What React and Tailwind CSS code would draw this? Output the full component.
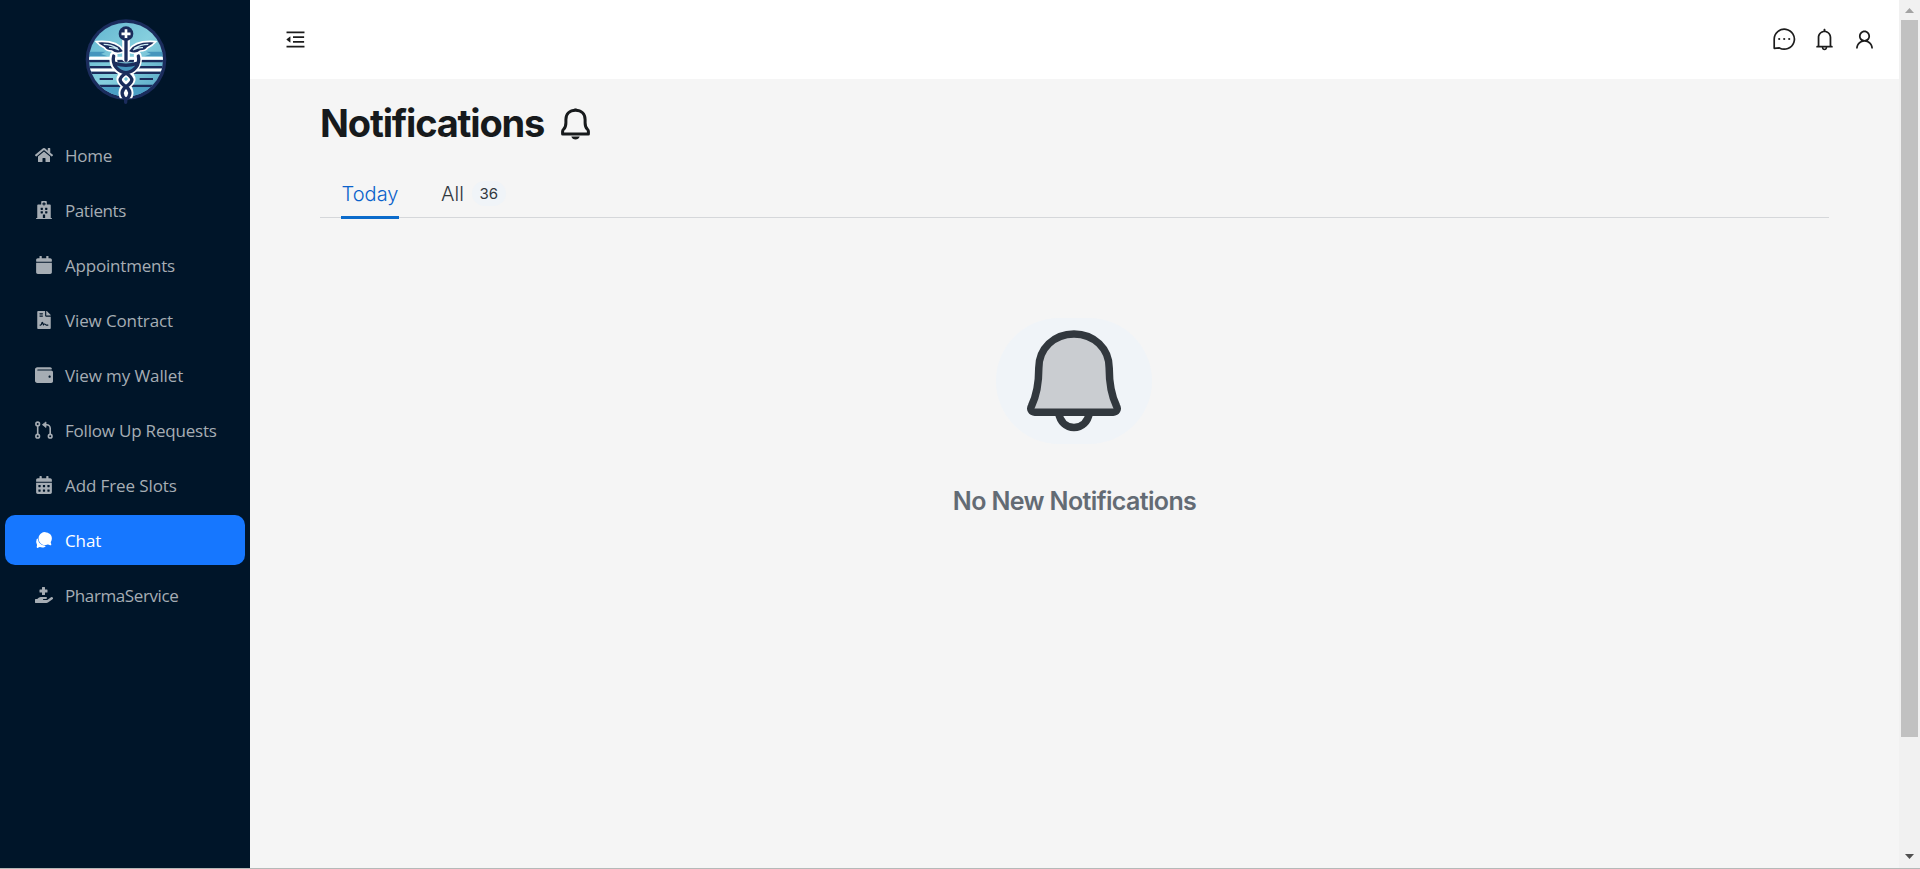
import {
  FaHome,
  FaHospital,
  FaCalendar,
  FaFileContract,
  FaWallet,
  FaCalendarAlt,
  FaHandHoldingMedical,
} from "react-icons/fa";
import { IoChatbubbles } from "react-icons/io5";
import { AiOutlineMenuFold, AiOutlineBell, AiOutlineUser } from "react-icons/ai";

function PullRequest({ className }) {
  return (
    <svg className={className} viewBox="0 0 18 18" fill="none" stroke="currentColor" strokeWidth="1.600">
      <circle cx="2.700" cy="2.900" r="1.800" />
      <circle cx="2.700" cy="15.200" r="1.800" />
      <circle cx="15.200" cy="15.200" r="1.800" />
      <path d="M2.700 4.700v8.700M15.200 13.400V7.200a3.500 3.500 0 0 0-3.500-3.500H10" />
      <path d="M11 .900v5.600L7.400 3.700Z" fill="currentColor" strokeWidth=".8" strokeLinejoin="round" />
    </svg>
  );
}

const items = [
  { label: "Home", Icon: FaHome, tracking: "tracking-[-0.25px]" },
  { label: "Patients", Icon: FaHospital, tracking: "tracking-[-0.4px]" },
  { label: "Appointments", Icon: FaCalendar, tracking: "tracking-[-0.2px]" },
  { label: "View Contract", Icon: FaFileContract, tracking: "tracking-[-0.13px]" },
  { label: "View my Wallet", Icon: FaWallet, tracking: "tracking-[-0.1px]" },
  { label: "Follow Up Requests", Icon: PullRequest, tracking: "tracking-[-0.2px]" },
  { label: "Add Free Slots", Icon: FaCalendarAlt, tracking: "tracking-[-0.1px]" },
  { label: "Chat", Icon: IoChatbubbles, tracking: "tracking-[-0.1px]", active: true },
  { label: "PharmaService", Icon: FaHandHoldingMedical, tracking: "tracking-[-0.4px]" },
];

function Logo() {
  return (
    <svg className="h-[86px] w-[82px]" viewBox="0 0 246 258" fill="none">
      <defs>
        <clipPath id="disc">
          <circle cx="123" cy="122" r="111" />
        </clipPath>
        <clipPath id="body">
          <path d="M0 0h246v238H0z" />
        </clipPath>
        <linearGradient id="sky" x1="0" y1="0" x2="1" y2="1">
          <stop offset="0" stopColor="#5cb2ce" />
          <stop offset="0.5" stopColor="#86cfde" />
          <stop offset="1" stopColor="#4d9fc0" />
        </linearGradient>
      </defs>
      <circle cx="123" cy="122" r="121" fill="#1b2c5c" />
      <g clipPath="url(#disc)">
        <rect width="246" height="246" fill="url(#sky)" />
        <path d="M0 98h62l-14 7 20 7H0zM246 98h-62l14 7-20 7h68z" fill="#4596bd" />
        <path d="M0 126h246M0 145h246M0 161h246M0 201h246" stroke="#1b2c5c" strokeWidth="8" />
        <path d="M0 118h246M0 153h246" stroke="#fff" strokeWidth="9" />
        <path d="M44 180h40M164 180h40" stroke="#1b2c5c" strokeWidth="6" />
        <path d="M0 205h246v50H0z" fill="#4b9fc5" />
      </g>
      <path
        clipPath="url(#body)"
        d="M123 52v66M86 110c-6 26 12 48 36 51 24-3 42-25 36-51M122 160c-26 18-17 28 2 42 14 12 12 28 2 38M124 160c26 18 17 28-2 42-14 12-12 28-2 38"
        stroke="#fff"
        strokeWidth="23"
        strokeLinecap="round"
      />
      <path
        d="M115 94C104 76 82 64 34 68c8 10 16 14 24 18 4 7 12 10 22 10 8 8 22 8 35 3zM131 94c11-18 33-30 81-26-8 10-16 14-24 18-4 7-12 10-22 10-8 8-22 8-35 3z"
        fill="#1b2c5c"
        stroke="#fff"
        strokeWidth="5"
      />
      <path
        d="M56 76c16 0 29 4 43 13M72 86c10-1 18 1 30 7M190 76c-16 0-29 4-43 13M174 86c-10-1-18 1-30 7"
        stroke="#cbeaf2"
        strokeWidth="4"
      />
      <circle cx="123" cy="44" r="22" fill="#1b2c5c" />
      <path d="M123 31v27M109.500 44.500h27" stroke="#fff" strokeWidth="8" />
      <path d="M90 134c4 16 18 27 33 28 15-1 29-12 33-28z" fill="#4596bd" />
      <path
        d="M123 62v62M86 111c-6 26 12 47 37 50 25-3 43-24 37-50M90 133c20 7 46 7 66 0"
        stroke="#1b2c5c"
        strokeWidth="10"
        strokeLinecap="round"
      />
      <path
        d="M122 163c-26 16-18 27 1 40 16 12 15 26 1 38M124 163c26 16 18 27-1 40-16 12-15 26-1 38v9"
        stroke="#1b2c5c"
        strokeWidth="10"
        strokeLinecap="round"
      />
    </svg>
  );
}

function ChatDots() {
  return (
    <svg className="size-6" viewBox="0 0 24 24" fill="none">
      <path
        d="M2.200 21.300V12.200A10.100 10 0 1 1 7.400 20.900Z"
        stroke="#1c1c1c"
        strokeWidth="1.700"
        strokeLinejoin="round"
      />
      <circle cx="7.200" cy="12" r="1.100" fill="#1c1c1c" />
      <circle cx="12.200" cy="12" r="1.100" fill="#1c1c1c" />
      <circle cx="17.200" cy="12" r="1.100" fill="#1c1c1c" />
    </svg>
  );
}

function TitleBell() {
  return (
    <svg className="h-8 w-[29px]" viewBox="0 0 29 32" fill="none">
      <path
        d="M14.500 2.300C8.600 2.300 4.900 6 4.900 11.500v3.200c0 3.400-.8 5.100-2.300 6.600-.8.800-1 1.300-1 2.300v2.300h25.800v-2.300c0-1-.2-1.500-1-2.300-1.500-1.500-2.300-3.200-2.300-6.600v-3.200c0-5.500-3.700-9.200-9.600-9.200Z"
        stroke="#171a1c"
        strokeWidth="3"
        strokeLinejoin="round"
      />
      <path d="M12.300 1.500a2.300 1.500 0 0 1 4.400 0zM10.300 28.500h8.400c-.6 1.900-2.200 3-4.200 3s-3.600-1.100-4.200-3Z" fill="#171a1c" />
    </svg>
  );
}

function EmptyBell() {
  return (
    <svg className="mr-px h-[102px] w-[94px]" viewBox="0 0 94 102" fill="none">
      <path
        d="M47 3.900C27 3.900 11.800 18.500 11.800 38c0 18-2.700 28.500-7.300 38-1.800 3.200.1 6.200 3.200 6.200h78.600c3.100 0 5-3 3.200-6.200-4.600-9.500-7.300-20-7.300-38C82.200 18.500 67 3.900 47 3.900Z"
        fill="#cacdd1"
        stroke="#32383e"
        strokeWidth="7.500"
        strokeLinejoin="round"
      />
      <path d="M31.600 83c1.600 8.800 7.500 14.500 15.400 14.500S60.800 91.800 62.400 83" stroke="#32383e" strokeWidth="7.500" />
    </svg>
  );
}

export default function App() {
  return (
    <div className="flex h-[869px] w-full flex-col overflow-hidden bg-[#f5f5f5] font-['Inter',sans-serif]">
      <div className="flex min-h-0 flex-1">
        <aside className="flex w-[250px] shrink-0 flex-col bg-[#001529]">
          <div className="flex h-[130px] justify-center pt-[19px] pl-0.5">
            <Logo />
          </div>
          <nav className="flex flex-col gap-[5px] px-[5px]">
            {items.map(({ label, Icon, tracking, active }) => (
              <a
                key={label}
                className={
                  active
                    ? "flex h-[50px] items-center gap-3 rounded-[10px] bg-[#1677ff] pl-[30px] text-white"
                    : "flex h-[50px] items-center gap-3 rounded-[10px] pl-[30px] text-[#a6adb4]"
                }
              >
                <Icon className="mb-px size-[18px] shrink-0" />
                <span className={`pt-px font-['Open_Sans',sans-serif] text-[17px] whitespace-nowrap ${tracking}`}>
                  {label}
                </span>
              </a>
            ))}
          </nav>
        </aside>

        <div className="flex min-w-0 flex-1 flex-col">
          <header className="flex h-[79px] shrink-0 items-center justify-between bg-white pr-[23px] pb-px pl-[34px] text-[#1c1c1c]">
            <AiOutlineMenuFold className="size-[23px]" />
            <div className="flex items-center gap-4">
              <ChatDots />
              <AiOutlineBell className="size-[25px]" />
              <AiOutlineUser className="size-[23px]" />
            </div>
          </header>
          <main className="flex flex-col px-[70px]">
            <div className="flex h-[89px] items-center gap-[17px]">
              <h1 className="text-[38px] font-bold tracking-[-1.18px] text-[#171a1c]">Notifications</h1>
              <TitleBell />
            </div>
            <div className="flex h-[50px] border-b border-[#d5d7da] pl-[21px]">
              <div className="flex h-[51px] w-[58px] justify-center border-b-[3px] border-[#0b6bcb] pt-[11px] text-xl leading-[30px] font-light text-[#0b62cb]">
                Today
              </div>
              <div className="flex items-start pt-[11px] pl-[42px] text-xl leading-[30px] font-light text-[#32383e]">
                All
                <span className="mt-[2px] ml-2 flex h-[25px] w-[34px] items-center justify-center rounded-full bg-[#f0f4f8] text-[15px] leading-none font-normal">
                  36
                </span>
              </div>
            </div>
            <section className="flex flex-col items-center pt-[100px]">
              <div className="mr-px flex h-[126px] w-[156px] items-center justify-center rounded-full bg-[#f0f4f8]">
                <EmptyBell />
              </div>
              <p className="mt-10 text-[25px] leading-[35px] font-semibold tracking-[-0.63px] text-[#636b74]">
                No New Notifications
              </p>
            </section>
          </main>
        </div>

        <div className="flex w-[21px] shrink-0 flex-col items-center bg-[#f1f1f1]">
          <svg className="h-5 w-[17px] shrink-0" viewBox="0 0 17 20">
            <path d="M4 13h9L8.500 8z" fill="#a3a3a3" />
          </svg>
          <div className="h-[717px] w-[17px] bg-[#c1c1c1]" />
          <svg className="mt-auto h-5 w-[17px] shrink-0" viewBox="0 0 17 20">
            <path d="M4 6h9l-4.500 5z" fill="#505050" />
          </svg>
        </div>
      </div>
      <div className="h-px shrink-0 bg-[#b5b9b8]" />
    </div>
  );
}
